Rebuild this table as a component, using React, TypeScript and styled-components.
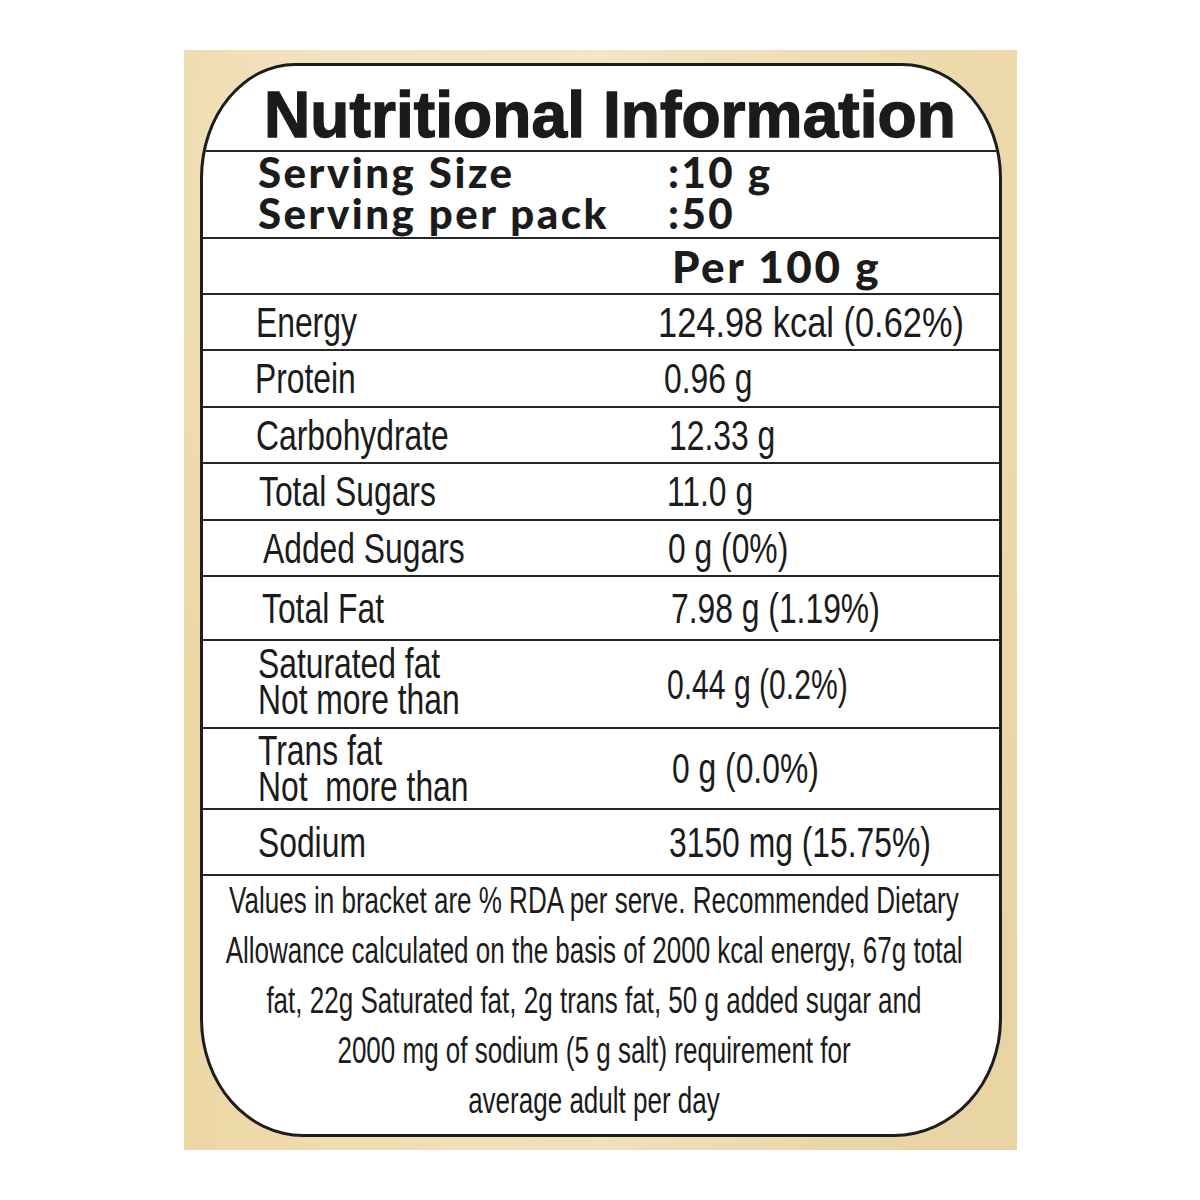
import React from "react";
import styled, { createGlobalStyle } from "styled-components";

const Global = createGlobalStyle`
  html, body { margin: 0; padding: 0; background: #ffffff; }
  body { font-family: "Liberation Sans", Arial, sans-serif; color: #1b1b1b; }
`;

const Page = styled.div`
  width: 1200px;
  height: 1200px;
  box-sizing: border-box;
  padding: 50px 0 0 184px;
`;

const Panel = styled.div`
  width: 833px;
  height: 1100px;
  box-sizing: border-box;
  padding: 13px 15px 13px 16px;
  background:
    radial-gradient(ellipse at 20% 10%, rgba(255, 255, 255, 0.25), transparent 40%),
    radial-gradient(ellipse at 85% 95%, rgba(210, 180, 120, 0.18), transparent 45%),
    linear-gradient(90deg, #edd7a5 0%, #f2e3c0 50%, #ecd8a9 100%);
`;

const Card = styled.div`
  height: 100%;
  box-sizing: border-box;
  border: 3px solid #1d1d1d;
  background: #ffffff;
  border-radius: 95px 100px 108px 103px / 115px 115px 118px 118px;
  overflow: hidden;
  display: flex;
  flex-direction: column;
`;

const Row = styled.div<{ $h: number }>`
  flex: none;
  height: ${(p) => p.$h}px;
  box-sizing: border-box;
  border-bottom: 2px solid #262626;
  display: grid;
  grid-template-columns: 455px 1fr;
  align-items: center;
`;

const TitleRow = styled.div`
  flex: none;
  height: 86px;
  box-sizing: border-box;
  border-bottom: 2px solid #262626;
  display: flex;
  justify-content: center;
  padding: 17px 0 0 18px;
`;

const Title = styled.h1`
  margin: 0;
  font-family: "Liberation Sans", Arial, sans-serif;
  font-weight: 700;
  font-size: 64px;
  line-height: 1;
  color: #1b1b1b;
  -webkit-text-stroke: 1.4px #1b1b1b;
  letter-spacing: 0.1px;
  white-space: nowrap;
`;

const Cell = styled.div<{ $indent: number; $shift?: number }>`
  padding-left: ${(p) => p.$indent}px;
  margin-top: ${(p) => ((p.$shift ?? 0) < 0 ? (p.$shift ?? 0) * 2 : 0)}px;
  margin-bottom: ${(p) => ((p.$shift ?? 0) > 0 ? (p.$shift ?? 0) * -2 : 0)}px;
  min-width: 0;
`;

const Geo = styled.div<{ $size?: number; $lift?: number }>`
  font-family: Lato, "Open Sans", sans-serif;
  font-weight: 900;
  font-size: ${(p) => p.$size ?? 42}px;
  line-height: 41px;
  letter-spacing: 2.5px;
  color: #1b1b1b;
  white-space: nowrap;
  margin-top: ${(p) => -(p.$lift ?? 4)}px;
`;

const Narrow = styled.span<{ $sx?: number }>`
  display: inline-block;
  font-family: "Liberation Sans", Arial, sans-serif;
  font-size: 43px;
  line-height: 36px;
  white-space: pre;
  color: #1b1b1b;
  transform: scaleX(${(p) => p.$sx ?? 0.74});
  transform-origin: left center;
`;

const Footer = styled.div`
  flex: 1;
  display: flex;
  flex-direction: column;
  align-items: center;
  padding: 0 14px 0 0;
`;

const FootLine = styled.div<{ $sx?: number }>`
  flex: none;
  font-family: "Liberation Sans", Arial, sans-serif;
  font-size: 37px;
  line-height: 50px;
  white-space: nowrap;
  color: #1b1b1b;
  transform: scaleX(${(p) => p.$sx ?? 0.703});
  transform-origin: center center;
`;

type Item = {
  label: string;
  value: string;
  h: number;
  li: number;
  vi: number;
  lsx?: number;
  vsx?: number;
  shift?: number;
};

const items: Item[] = [
  { label: "Energy", value: "124.98 kcal (0.62%)", h: 56, li: 53, vi: 0, vsx: 0.8 },
  { label: "Protein", value: "0.96 g", h: 57, li: 52, vi: 6 },
  { label: "Carbohydrate", value: "12.33 g", h: 56, li: 53, vi: 11 },
  { label: "Total Sugars", value: "11.0 g", h: 57, li: 56, vi: 9 },
  { label: "Added Sugars", value: "0 g (0%)", h: 56, li: 60, vi: 10 },
  { label: "Total Fat", value: "7.98 g (1.19%)", h: 64, li: 59, vi: 13 },
  { label: "Saturated fat\nNot more than", value: "0.44 g (0.2%)", h: 88, li: 55, vi: 9, vsx: 0.7, shift: -3 },
  { label: "Trans fat\nNot  more than", value: "0 g (0.0%)", h: 81, li: 55, vi: 14 },
  { label: "Sodium", value: "3150 mg (15.75%)", h: 66, li: 55, vi: 11 },
];

const footer = [
  "Values in bracket are % RDA per serve. Recommended Dietary",
  "Allowance calculated on the basis of 2000 kcal energy, 67g total",
  "fat, 22g Saturated fat, 2g trans fat, 50 g added sugar and",
  "2000 mg of sodium (5 g salt) requirement for",
  "average adult per day",
];

export default function App() {
  return (
    <>
      <Global />
      <Page>
        <Panel>
          <Card>
            <TitleRow>
              <Title>Nutritional Information</Title>
            </TitleRow>
            <Row $h={87}>
              <Cell $indent={55}>
                <Geo>
                  Serving Size
                  <br />
                  Serving per pack
                </Geo>
              </Cell>
              <Cell $indent={10}>
                <Geo>
                  :10 g
                  <br />
                  :50
                </Geo>
              </Cell>
            </Row>
            <Row $h={56}>
              <Cell $indent={55} />
              <Cell $indent={14}>
                <Geo $size={44} $lift={0}>Per 100 g</Geo>
              </Cell>
            </Row>
            {items.map((it) => (
              <Row key={it.label} $h={it.h}>
                <Cell $indent={it.li} $shift={it.shift}>
                  <Narrow $sx={it.lsx}>{it.label}</Narrow>
                </Cell>
                <Cell $indent={it.vi}>
                  <Narrow $sx={it.vsx}>{it.value}</Narrow>
                </Cell>
              </Row>
            ))}
            <Footer>
              {footer.map((line) => (
                <FootLine key={line}>{line}</FootLine>
              ))}
            </Footer>
          </Card>
        </Panel>
      </Page>
    </>
  );
}
